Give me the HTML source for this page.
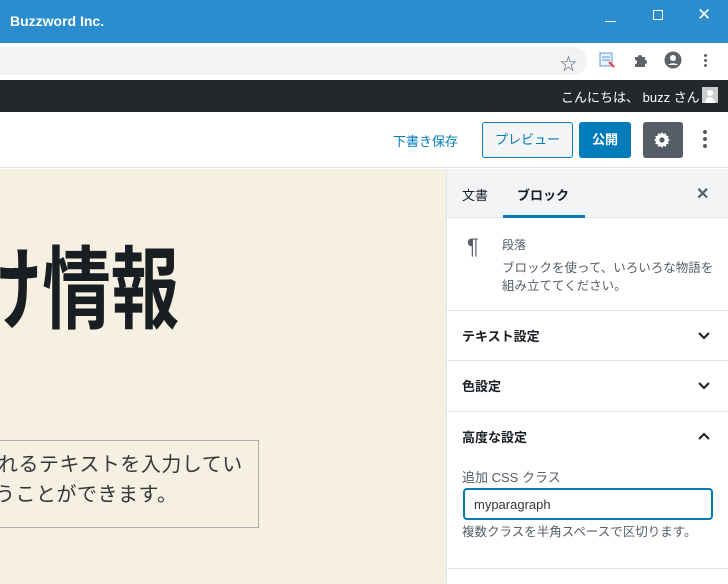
<!DOCTYPE html>
<html><head><meta charset="utf-8"><style>
*{margin:0;padding:0;box-sizing:border-box}
body{width:728px;height:584px;overflow:hidden;position:relative;font-family:"Liberation Sans","Noto Sans CJK JP",sans-serif;background:#fff}
.a{position:absolute}
</style></head><body>
<div class="a" style="left:0;top:0;width:728px;height:43px;background:#2a8dcd"></div>
<div class="a" style="left:10px;top:13px;color:#fff;font-size:14px;font-weight:bold">Buzzword Inc.</div>
<div class="a" style="left:605px;top:21px;width:11px;height:1px;background:#fff"></div>
<div class="a" style="left:653px;top:10px;width:10px;height:10px;border:1px solid #fff"></div>
<div class="a" style="left:697px;top:5px;color:#fff;font-size:17px">✕</div>
<div class="a" style="left:0;top:43px;width:728px;height:37px;background:#fff"></div>
<div class="a" style="left:-20px;top:47px;width:607px;height:28px;background:#f1f3f4;border-radius:14px"></div>
<div class="a" style="left:560px;top:50px;font-size:17px;color:#5f6368">☆</div>
<svg class="a" style="left:598px;top:51px" width="18" height="18"><rect x="2" y="2" width="12" height="13" fill="#e8f0fe" stroke="#5b9bd5"/><line x1="4" y1="6" x2="12" y2="6" stroke="#5b9bd5"/><line x1="4" y1="9" x2="12" y2="9" stroke="#5b9bd5"/><path d="M11 11l5 5" stroke="#e94235" stroke-width="2"/></svg>
<svg class="a" style="left:632px;top:52px" width="16" height="16"><path d="M3 5h3a2 2 0 014 0h3v3a2 2 0 010 4v3H3v-3a2 2 0 000-4z" fill="#5f6368"/></svg>
<svg class="a" style="left:664px;top:51px" width="18" height="18"><circle cx="9" cy="9" r="8.5" fill="#5f6368"/><circle cx="9" cy="7" r="3" fill="#fff"/><path d="M4 14a6 4 0 0110 0" fill="#fff"/></svg>
<div class="a" style="left:704px;top:54px;width:3px;height:3px;border-radius:50%;background:#5f6368;box-shadow:0 5px #5f6368,0 10px #5f6368"></div>
<div class="a" style="left:0;top:80px;width:728px;height:32px;background:#23282d"></div>
<div class="a" style="left:561px;top:87px;color:#fff;font-size:13px">こんにちは、 buzz さん</div>
<div class="a" style="left:702px;top:87px;width:16px;height:16px;background:#ccc"><svg width="16" height="16"><circle cx="8" cy="6" r="3" fill="#fff"/><path d="M3 16a5 6 0 0110 0" fill="#fff"/></svg></div>
<div class="a" style="left:0;top:112px;width:728px;height:56px;background:#fff;border-bottom:1px solid #e2e4e7"></div>
<div class="a" style="left:393px;top:131px;color:#007cba;font-size:13px">下書き保存</div>
<div class="a" style="left:482px;top:122px;width:91px;height:36px;border:1px solid #007cba;border-radius:3px;background:#f3f5f6;color:#007cba;font-size:13px;text-align:center;line-height:34px">プレビュー</div>
<div class="a" style="left:579px;top:122px;width:52px;height:36px;background:#007cba;border-radius:3px;color:#fff;font-size:13px;text-align:center;line-height:36px;font-weight:bold">公開</div>
<div class="a" style="left:643px;top:122px;width:40px;height:36px;background:#555d66;border-radius:3px"></div>
<svg class="a" style="left:652px;top:130px" width="20" height="20" viewBox="0 0 20 20"><path d="M10 2l1.5 2 2.3-.8.5 2.4 2.4.5-.8 2.3 2 1.6-2 1.5.8 2.3-2.4.5-.5 2.4-2.3-.8L10 18l-1.5-2-2.3.8-.5-2.4-2.4-.5.8-2.3L2 10l2-1.5-.8-2.3 2.4-.5.5-2.4 2.3.8z" fill="#fff"/><circle cx="10" cy="10" r="2.6" fill="#555d66"/></svg>
<div class="a" style="left:703px;top:130px;width:4px;height:4px;border-radius:50%;background:#555d66;box-shadow:0 7px #555d66,0 14px #555d66"></div>
<div class="a" style="left:0;top:169px;width:447px;height:415px;background:#f5f0e1"></div>
<div class="a" style="left:0;top:169px;width:447px;height:415px;overflow:hidden">
<div class="a" style="left:-26px;top:66px;font-size:90px;font-weight:bold;color:#191e23;transform:scaleX(0.76);transform-origin:0 0;white-space:nowrap;line-height:112px">け情報</div>
</div>
<div class="a" style="left:-10px;top:440px;width:269px;height:88px;border:1px solid #a8aaab"></div>
<div class="a" style="left:-2px;top:450px;font-size:20px;letter-spacing:0.5px;color:#32373c;line-height:30px;white-space:nowrap">れるテキストを入力してい<br><span style="margin-left:-3px">うことができます。</span></div>
<div class="a" style="left:446px;top:169px;width:282px;height:415px;background:#fff;border-left:1px solid #e2e4e7"></div>
<div class="a" style="left:447px;top:169px;width:281px;height:49px;background:#f3f4f5;border-bottom:1px solid #e2e4e7"></div>
<div class="a" style="left:462px;top:185px;font-size:13px;color:#191e23">文書</div>
<div class="a" style="left:517px;top:185px;font-size:13px;color:#191e23;font-weight:bold">ブロック</div>
<div class="a" style="left:503px;top:215px;width:82px;height:3px;background:#007cba"></div>
<div class="a" style="left:696px;top:184px;font-size:16px;color:#555d66;font-weight:bold">✕</div>
<div class="a" style="left:467px;top:234px;font-size:22px;color:#555d66">¶</div>
<div class="a" style="left:502px;top:236px;font-size:12px;color:#555d66">段落</div>
<div class="a" style="left:502px;top:259px;font-size:12.5px;color:#555d66;line-height:18px;width:215px">ブロックを使って、いろいろな物語を組み立ててください。</div>
<div class="a" style="left:447px;top:310px;width:281px;height:1px;background:#e2e4e7"></div>
<div class="a" style="left:462px;top:326px;font-size:13px;font-weight:bold;color:#191e23">テキスト設定</div>
<div class="a" style="left:447px;top:360px;width:281px;height:1px;background:#e2e4e7"></div>
<div class="a" style="left:462px;top:376px;font-size:13px;font-weight:bold;color:#191e23">色設定</div>
<div class="a" style="left:447px;top:411px;width:281px;height:1px;background:#e2e4e7"></div>
<div class="a" style="left:462px;top:427px;font-size:13px;font-weight:bold;color:#191e23">高度な設定</div>
<svg class="a" style="left:697px;top:329px" width="14" height="14"><path d="M2 4l5 5 5-5" fill="none" stroke="#191e23" stroke-width="2"/></svg>
<svg class="a" style="left:697px;top:379px" width="14" height="14"><path d="M2 4l5 5 5-5" fill="none" stroke="#191e23" stroke-width="2"/></svg>
<svg class="a" style="left:697px;top:429px" width="14" height="14"><path d="M2 10l5-5 5 5" fill="none" stroke="#191e23" stroke-width="2"/></svg>
<div class="a" style="left:462px;top:467px;font-size:13px;color:#555d66">追加 CSS クラス</div>
<div class="a" style="left:463px;top:488px;width:250px;height:32px;border:2px solid #007cba;border-radius:4px;font-size:13px;color:#32373c;padding:7px 9px">myparagraph</div>
<div class="a" style="left:462px;top:521px;font-size:12.5px;color:#555d66">複数クラスを半角スペースで区切ります。</div>
<div class="a" style="left:447px;top:568px;width:281px;height:1px;background:#e2e4e7"></div>
</body></html>
